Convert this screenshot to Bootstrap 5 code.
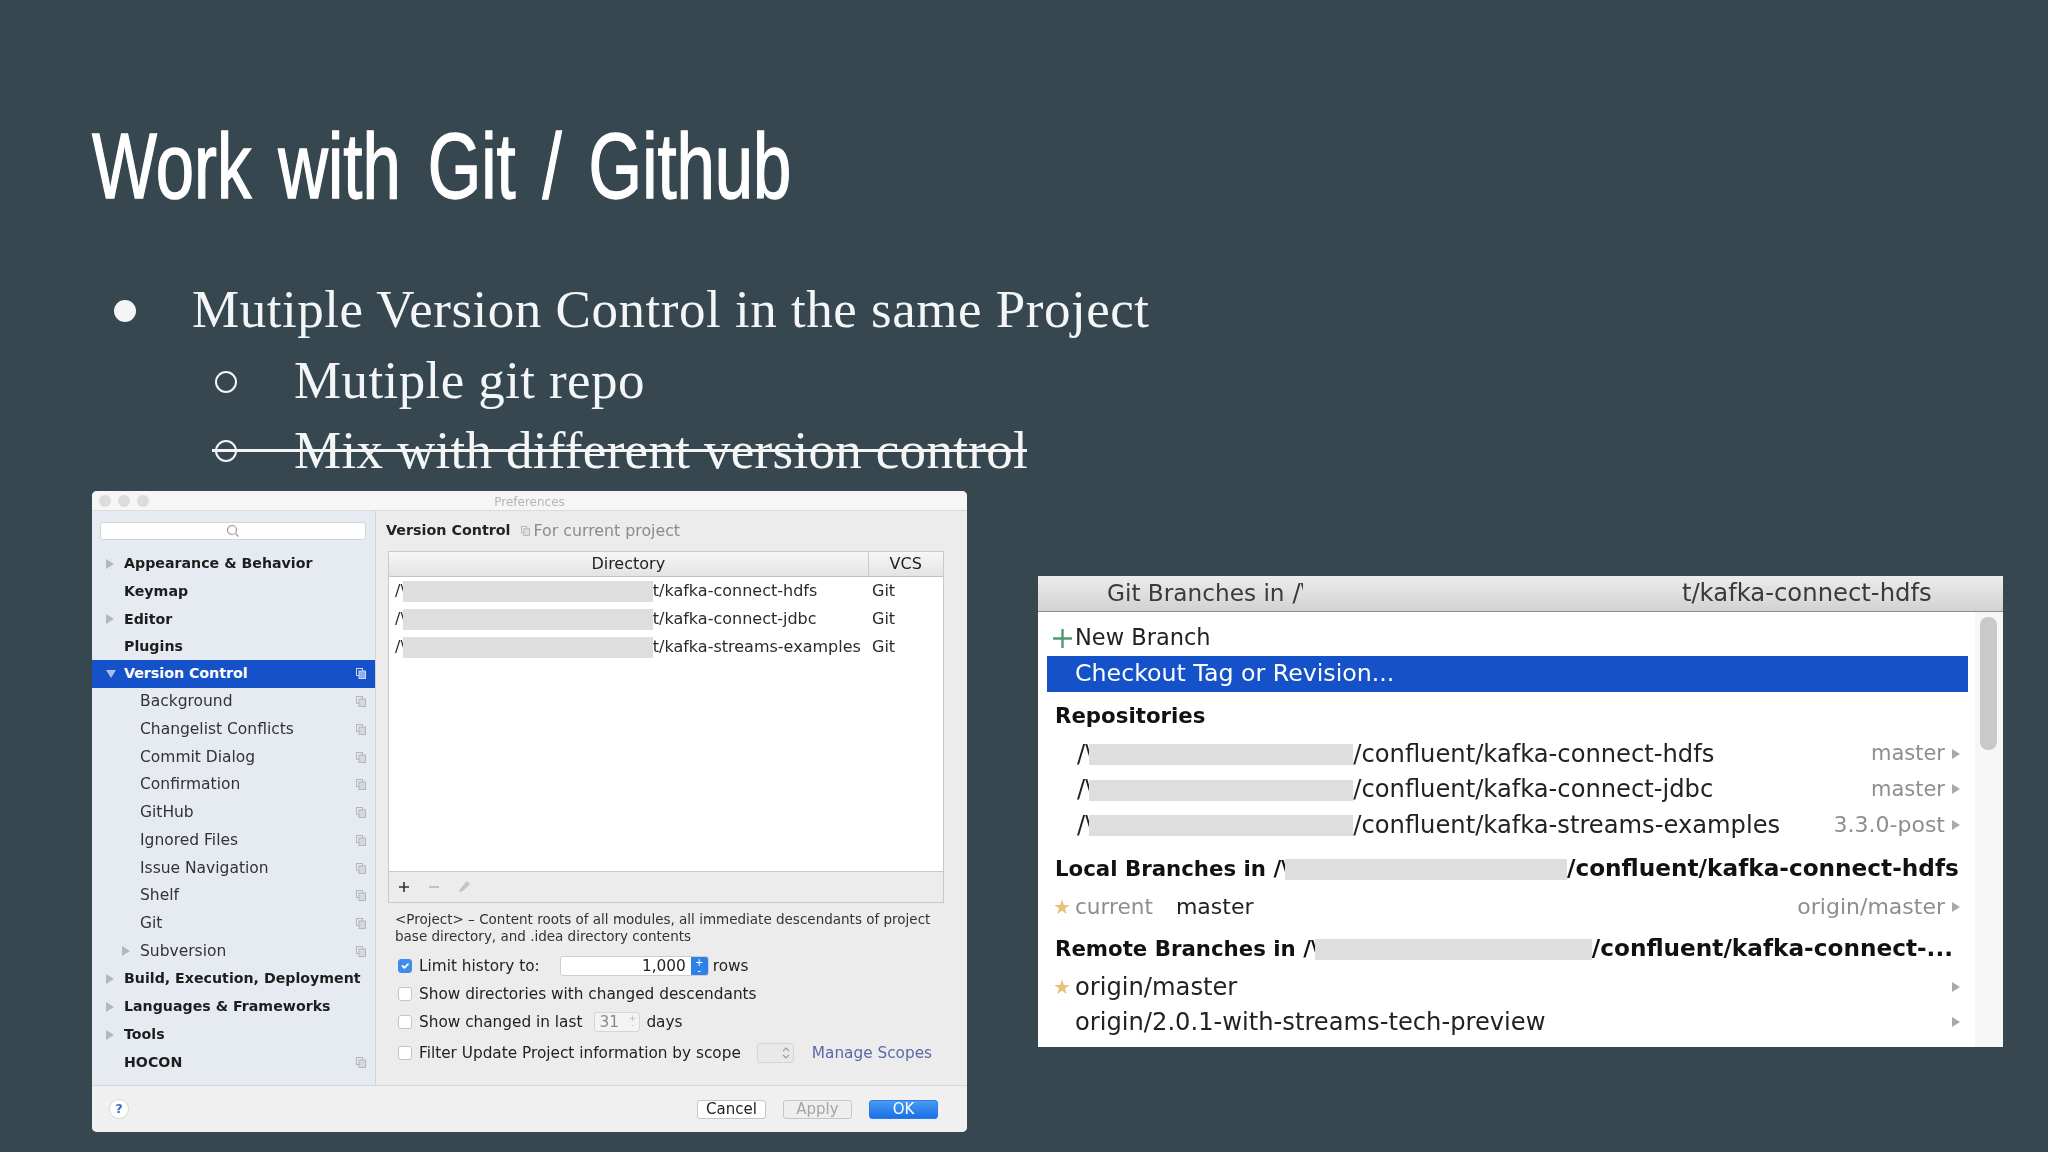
<!DOCTYPE html>
<html lang="en">
<head>
  <meta charset="UTF-8" />
  <title>Work with Git / Github</title>
  <link href="https://cdn.jsdelivr.net/npm/bootstrap@5.3.0/dist/css/bootstrap.min.css" rel="stylesheet">
  <style>
    html, body { margin: 0; height: 100%; }
    body { background: #37474f; overflow: hidden; }

    .slide { width: 2048px; height: 1152px; padding-left: 92px; }
    .title-wrap { padding-top: 120px; height: 274px; }
    .slide-title {
      display: inline-block; transform: scaleX(.74); transform-origin: left center;
      font-family: "Liberation Sans", sans-serif; -webkit-text-stroke: 1.4px #fff; white-space: nowrap;
      font-size: 93px; line-height: 1; font-weight: 400; color: #fff; margin: 0; word-spacing: 10.6px;
    }
    .bullets { list-style: none; margin: 0; padding: 0; height: 217px; color: #f3f5f6;
      font-family: "Liberation Serif", serif; font-size: 53px; letter-spacing: .4px; }
    .bullets li { height: 71px; line-height: 71px; position: relative; display: flex; align-items: center; }
    .bullets li.lvl1 { letter-spacing: .52px; }
    .bullets li.struck { height: 69px; letter-spacing: .32px; }
    .lvl1 { padding-left: 100px; }
    .lvl2 { padding-left: 202px; }
    .dot { position: absolute; left: 22px; top: 26px; width: 22px; height: 22px; border-radius: 50%; background: #f3f5f6; }
    .ring { position: absolute; left: 123px; top: 26px; width: 22px; height: 22px; border-radius: 50%; border: 2px solid #f3f5f6; }
    .struck .ring { top: 24px; }
    .struck::after { content: ""; position: absolute; left: 120px; width: 815px; top: 33px; height: 3px; background: #f3f5f6; }

    .shots { align-items: flex-start; gap: 71px; }

    /* preferences window */
    .prefs { width: 875px; height: 641px; background: #ececec; border: 0; border-radius: 5px; overflow: hidden;
      font-family: "DejaVu Sans", sans-serif; color: #222; filter: blur(.35px); }
    .prefs-top { height: 20px; background: #f6f6f6; border-bottom: 1px solid #dcdcdc; position: relative; padding-left: 7px; gap: 7px; }
    .light { width: 12px; height: 12px; border-radius: 50%; background: #dcdcdc; }
    .prefs-title { position: absolute; left: 0; right: 0; top: 2px; text-align: center; font-size: 12px; color: #b5b5b5; }
    .prefs-mid { height: 574px; }
    .side { width: 284px; background: #e6ebf2; border-right: 1px solid #cfd3d8; padding-top: 11px; }
    .search-box { height: 18px; margin: 0 9px 10px 8px; background: #fff; border: 1px solid #d2d5da; border-radius: 3px; }
    .side .list-group-item { background: transparent; border: 0; border-radius: 0; height: 27.75px; padding: 0 9px 0 14px; color: #333; font-size: 15.5px; }
    .side .list-group-item.top { font-weight: 700; font-size: 14.2px; color: #1d1d1d; }
    .side .list-group-item.active { background: #1551c8; color: #fff; }
    .arrow-slot { width: 18px; flex: none; }
    .sub-slot { width: 34px; flex: none; padding-left: 16px; }
    .tri { display: block; width: 0; height: 0; border-left: 8px solid #b4b8bd; border-top: 5px solid transparent; border-bottom: 5px solid transparent; }
    .tri-down { display: block; width: 0; height: 0; border-top: 8px solid #a9c0ec; border-left: 5px solid transparent; border-right: 5px solid transparent; }
    .copy-ic { width: 10px; height: 11px; flex: none; margin-left: auto; }

    .pane { width: 590px; padding: 0 0 0 10px; font-size: 15.3px; }
    .pane-head { height: 40px; }
    .pane-head b { font-size: 14.3px; color: #222; }
    .muted-label { color: #8b8b8b; font-size: 15.8px; margin-left: 2px; }
    .vcs-box { width: 556px; margin-left: 2px; border: 1px solid #c9c9c9; }
    .vcs-white { height: 319px; background: #fff; }
    .vcs-table { table-layout: fixed; width: 100%; margin: 0; --bs-table-bg: transparent; }
    .vcs-table th { height: 23px; padding: 0; text-align: center; font-weight: 400; font-size: 16px; color: #222;
      background: linear-gradient(#f7f7f7, #e3e3e3); border-bottom: 1px solid #c3c3c3; }
    .vcs-table th + th { border-left: 1px solid #c9c9c9; }
    .vcs-table td { height: 28.4px; padding: 0 0 0 6px; font-size: 16px; color: #2a2a2a; white-space: nowrap; border: 0; vertical-align: middle; }
    .vcs-table td + td { padding-left: 4px; }
    .vcs-bar { height: 31px; background: #ececec; border-top: 1px solid #c9c9c9; padding-left: 8px; gap: 16px; }
    .redact { display: inline-block; background: #dedede; vertical-align: middle; }
    .rd-a { width: 250px; height: 21px; margin-left: -3px; }
    .desc { margin: 8px 0 0 9px; font-size: 13.5px; line-height: 17px; color: #333; white-space: nowrap; }
    .opt { height: 28px; padding-left: 12px; gap: 7px; white-space: nowrap; font-size: 15.3px; }
    .opt-first { margin-top: 7px; }
    .opt-last { margin-top: 3px; }
    .opt .form-check-input { width: 14px; height: 14px; margin: 0; border-color: #c4c4c4; border-radius: 3px; flex: none; }
    .opt .form-check-input:checked { background-color: #3f8cea; border-color: #3f8cea; }
    .num-field { width: 149px; height: 20px; margin: 0 -3px 0 13px; background: #fff; border: 1px solid #cfcfcf; border-radius: 3px; text-align: right; line-height: 18px; overflow: hidden; }
    .num-step { width: 17px; background: #2f80e8; color: #fff; margin-left: 5px; font-size: 10px; line-height: 8px; text-align: center; padding-top: 2px; }
    .num-small { width: 46px; height: 20px; background: #f4f4f4; border: 1px solid #d5d5d5; border-radius: 3px; color: #8b8b8b; padding-left: 4px; line-height: 18px; margin-left: 5px; margin-right: -1px; }
    .small-step { margin-left: auto; margin-right: 3px; color: #bdbdbd; font-size: 9px; line-height: 7px; text-align: center; padding-top: 2px; }
    .sel-empty { width: 37px; height: 20px; margin-left: 9px; padding-right: 3px; background: #e9e9e9; border: 1px solid #d5d5d5; border-radius: 3px; }
    .scope-link { margin-left: 11px; color: #5a68a8; }
    .prefs-foot { height: 47px; background: #f0f0f0; border-top: 1px solid #d6d6d6; padding: 0 29px 0 17px; }
    .help-dot { width: 20px; height: 20px; border-radius: 50%; background: #fff; border: 1px solid #d8d8d8; color: #3f6fc0; font-size: 13px; font-weight: 700; line-height: 18px; text-align: center; }
    .foot-btn { width: 69px; height: 19px; padding: 0; font-size: 15px; line-height: 17px; border-radius: 3px; background: #fff; border: 1px solid #c6c6c6; color: #222; font-family: "DejaVu Sans", sans-serif; margin-left: 17px; }
    .foot-btn.off { background: #eee; color: #a5a5a5; }
    .foot-btn.go { background: linear-gradient(#4a9bf2, #1a6fe6); border-color: #2a7ce8; color: #fff; }

    /* git branches popup */
    .branches { width: 965px; height: 471px; margin-top: 85px; background: #fff; border: 0; border-radius: 0; overflow: hidden;
      font-family: "DejaVu Sans", sans-serif; color: #222; font-size: 24.2px; filter: blur(.35px); }
    .branches-head { height: 36px; background: linear-gradient(#ececec, #d2d2d2); border-bottom: 1px solid #8f8f8f; padding-left: 69px; color: #3a3a3a; white-space: nowrap; font-size: 24.3px; }
    .head-label { font-size: 23.2px; margin-right: 8px; }
    .rd-b { width: 379px; height: 35px; margin-left: -6px; background: linear-gradient(#ececec, #d2d2d2); }
    .branches-body { position: relative; height: 435px; padding: 8px 0 0 9px; }
    .scroll-strip { position: absolute; right: 0; top: 0; bottom: 0; width: 28px; background: #f7f7f7; }
    .scroll-thumb { position: absolute; right: 6px; top: 5px; width: 17px; height: 133px; border-radius: 8px; background: #c9c9c9; }
    .br-row { position: relative; width: 921px; height: 36px; white-space: nowrap; padding-right: 8px; }
    .br-row.pick { background: #1551c8; color: #fff; font-size: 23.7px; }
    .br-row.tall { height: 35.5px; }
    .br-row b { color: #111; font-size: 21.3px; }
    .br-row b .bpath { font-size: 23.2px; }
    .new-br { font-size: 22.5px; }
    .plus-ic { width: 19px; height: 19px; margin: 0 3px 0 6px; flex: none; }
    .txt-in { padding-left: 28px; }
    .txt-in2 { padding-left: 30px; }
    .rd-c { height: 21px; background: #dedede; display: inline-block; vertical-align: middle; margin-left: -4px; }
    .rd-c1 { width: 264px; }
    .rd-c2 { width: 277px; }
    .rd-c3 { width: 282px; }
    .hint { color: #8e8e8e; margin-left: auto; font-size: 22px; }
    .hint-sm { font-size: 21px; }
    .tri-sm { display: block; width: 0; height: 0; border-left: 8px solid #a9a9a9; border-top: 5px solid transparent; border-bottom: 5px solid transparent; margin-left: 7px; flex: none; }
    .tri-end { margin-left: auto; }
    .star { color: #e9c27a; width: 22px; margin-left: 6px; flex: none; font-size: 20px; }
    .cur-label { color: #8e8e8e; margin-right: 23px; font-size: 21.6px; }
    .cur-name { font-size: 22px; }
    .sec-a { margin-top: 6px; }
    .sec-b { margin-top: 2px; }
    .sec-c { margin-top: 8px; }
    .sec-d { margin-top: 3px; }
    .sec-e { margin-top: 6px; }
  </style>
</head>
<body>
  <div class="slide">
    <div class="title-wrap"><h1 class="slide-title">Work with Git / Github</h1></div>
    <ul class="bullets">
      <li class="lvl1"><span class="dot"></span>Mutiple Version Control in the same Project</li>
      <li class="lvl2"><span class="ring"></span>Mutiple git repo</li>
      <li class="lvl2 struck"><span class="ring"></span>Mix with different version control</li>
    </ul>

    <div class="d-flex shots">
      <div class="card prefs">
        <div class="prefs-top d-flex align-items-center">
          <span class="light"></span><span class="light"></span><span class="light"></span>
          <span class="prefs-title">Preferences</span>
        </div>
        <div class="prefs-mid d-flex">
          <div class="side">
            <div class="search-box d-flex align-items-center justify-content-center">
              <svg width="14" height="14" viewBox="0 0 14 14" fill="none" stroke="#9a9a9a" stroke-width="1.2"><circle cx="6" cy="6" r="4.5"/><path d="M9.5 9.5l3 3"/></svg>
            </div>
            <ul class="list-group">
              <li class="list-group-item top d-flex align-items-center"><span class="arrow-slot"><i class="tri"></i></span>Appearance &amp; Behavior</li>
              <li class="list-group-item top d-flex align-items-center"><span class="arrow-slot"></span>Keymap</li>
              <li class="list-group-item top d-flex align-items-center"><span class="arrow-slot"><i class="tri"></i></span>Editor</li>
              <li class="list-group-item top d-flex align-items-center"><span class="arrow-slot"></span>Plugins</li>
              <li class="list-group-item top active d-flex align-items-center"><span class="arrow-slot"><i class="tri-down"></i></span>Version Control<svg class="copy-ic" viewBox="0 0 10 11" fill="none" stroke="#c9d8f5"><rect x="0.5" y="0.5" width="6" height="7"/><rect x="3" y="3" width="6.5" height="7.5" fill="#8fb0ea"/></svg></li>
              <li class="list-group-item d-flex align-items-center"><span class="sub-slot"></span>Background<svg class="copy-ic" viewBox="0 0 10 11" fill="none" stroke="#b3b7bc"><rect x="0.5" y="0.5" width="6" height="7"/><rect x="3" y="3" width="6.5" height="7.5" fill="#d5d8dc"/></svg></li>
              <li class="list-group-item d-flex align-items-center"><span class="sub-slot"></span>Changelist Conflicts<svg class="copy-ic" viewBox="0 0 10 11" fill="none" stroke="#b3b7bc"><rect x="0.5" y="0.5" width="6" height="7"/><rect x="3" y="3" width="6.5" height="7.5" fill="#d5d8dc"/></svg></li>
              <li class="list-group-item d-flex align-items-center"><span class="sub-slot"></span>Commit Dialog<svg class="copy-ic" viewBox="0 0 10 11" fill="none" stroke="#b3b7bc"><rect x="0.5" y="0.5" width="6" height="7"/><rect x="3" y="3" width="6.5" height="7.5" fill="#d5d8dc"/></svg></li>
              <li class="list-group-item d-flex align-items-center"><span class="sub-slot"></span>Confirmation<svg class="copy-ic" viewBox="0 0 10 11" fill="none" stroke="#b3b7bc"><rect x="0.5" y="0.5" width="6" height="7"/><rect x="3" y="3" width="6.5" height="7.5" fill="#d5d8dc"/></svg></li>
              <li class="list-group-item d-flex align-items-center"><span class="sub-slot"></span>GitHub<svg class="copy-ic" viewBox="0 0 10 11" fill="none" stroke="#b3b7bc"><rect x="0.5" y="0.5" width="6" height="7"/><rect x="3" y="3" width="6.5" height="7.5" fill="#d5d8dc"/></svg></li>
              <li class="list-group-item d-flex align-items-center"><span class="sub-slot"></span>Ignored Files<svg class="copy-ic" viewBox="0 0 10 11" fill="none" stroke="#b3b7bc"><rect x="0.5" y="0.5" width="6" height="7"/><rect x="3" y="3" width="6.5" height="7.5" fill="#d5d8dc"/></svg></li>
              <li class="list-group-item d-flex align-items-center"><span class="sub-slot"></span>Issue Navigation<svg class="copy-ic" viewBox="0 0 10 11" fill="none" stroke="#b3b7bc"><rect x="0.5" y="0.5" width="6" height="7"/><rect x="3" y="3" width="6.5" height="7.5" fill="#d5d8dc"/></svg></li>
              <li class="list-group-item d-flex align-items-center"><span class="sub-slot"></span>Shelf<svg class="copy-ic" viewBox="0 0 10 11" fill="none" stroke="#b3b7bc"><rect x="0.5" y="0.5" width="6" height="7"/><rect x="3" y="3" width="6.5" height="7.5" fill="#d5d8dc"/></svg></li>
              <li class="list-group-item d-flex align-items-center"><span class="sub-slot"></span>Git<svg class="copy-ic" viewBox="0 0 10 11" fill="none" stroke="#b3b7bc"><rect x="0.5" y="0.5" width="6" height="7"/><rect x="3" y="3" width="6.5" height="7.5" fill="#d5d8dc"/></svg></li>
              <li class="list-group-item d-flex align-items-center"><span class="sub-slot"><i class="tri"></i></span>Subversion<svg class="copy-ic" viewBox="0 0 10 11" fill="none" stroke="#b3b7bc"><rect x="0.5" y="0.5" width="6" height="7"/><rect x="3" y="3" width="6.5" height="7.5" fill="#d5d8dc"/></svg></li>
              <li class="list-group-item top d-flex align-items-center"><span class="arrow-slot"><i class="tri"></i></span>Build, Execution, Deployment</li>
              <li class="list-group-item top d-flex align-items-center"><span class="arrow-slot"><i class="tri"></i></span>Languages &amp; Frameworks</li>
              <li class="list-group-item top d-flex align-items-center"><span class="arrow-slot"><i class="tri"></i></span>Tools</li>
              <li class="list-group-item top d-flex align-items-center"><span class="arrow-slot"></span>HOCON<svg class="copy-ic" viewBox="0 0 10 11" fill="none" stroke="#b3b7bc"><rect x="0.5" y="0.5" width="6" height="7"/><rect x="3" y="3" width="6.5" height="7.5" fill="#d5d8dc"/></svg></li>
            </ul>
          </div>
          <div class="pane">
            <div class="pane-head d-flex align-items-center gap-2">
              <b>Version Control</b>
              <span class="muted-label d-flex align-items-center gap-1"><svg width="9" height="10" viewBox="0 0 10 11" fill="none" stroke="#b3b3b3"><rect x="0.5" y="0.5" width="6" height="7"/><rect x="3" y="3" width="6.5" height="7.5" fill="#ddd"/></svg>For current project</span>
            </div>
            <div class="vcs-box">
              <div class="vcs-white">
                <table class="table table-borderless vcs-table">
                  <colgroup><col style="width:479px"><col></colgroup>
                  <thead><tr><th>Directory</th><th>VCS</th></tr></thead>
                  <tbody>
                    <tr><td>/\<span class="redact rd-a"></span>t/kafka-connect-hdfs</td><td>Git</td></tr>
                    <tr><td>/\<span class="redact rd-a"></span>t/kafka-connect-jdbc</td><td>Git</td></tr>
                    <tr><td>/\<span class="redact rd-a"></span>t/kafka-streams-examples</td><td>Git</td></tr>
                  </tbody>
                </table>
              </div>
              <div class="vcs-bar d-flex align-items-center">
                <svg width="14" height="14" viewBox="0 0 14 14" stroke="#333" stroke-width="1.6"><path d="M7 2v10M2 7h10"/></svg>
                <svg width="14" height="14" viewBox="0 0 14 14" stroke="#b8b8b8" stroke-width="1.6"><path d="M2 7h10"/></svg>
                <svg width="14" height="14" viewBox="0 0 14 14" fill="#c4c4c4"><path d="M10 1l3 3-7 7-4 1.5L3 9z"/></svg>
              </div>
            </div>
            <p class="desc">&lt;Project&gt; – Content roots of all modules, all immediate descendants of project<br>base directory, and .idea directory contents</p>
            <div class="opt opt-first d-flex align-items-center"><input class="form-check-input" type="checkbox" checked>Limit history to:<span class="num-field d-flex justify-content-end"><span>1,000</span><span class="num-step">+<br>-</span></span>rows</div>
            <div class="opt d-flex align-items-center"><input class="form-check-input" type="checkbox">Show directories with changed descendants</div>
            <div class="opt d-flex align-items-center"><input class="form-check-input" type="checkbox">Show changed in last<span class="num-small d-flex">31<span class="small-step">+<br>-</span></span>days</div>
            <div class="opt opt-last d-flex align-items-center"><input class="form-check-input" type="checkbox">Filter Update Project information by scope<span class="sel-empty d-flex align-items-center justify-content-end"><svg width="8" height="14" viewBox="0 0 8 14" fill="none" stroke="#999" stroke-width="1.1"><path d="M1 5l3-3 3 3M1 9l3 3 3-3"/></svg></span><span class="scope-link">Manage Scopes</span></div>
          </div>
        </div>
        <div class="prefs-foot d-flex align-items-center">
          <span class="help-dot">?</span>
          <button class="btn foot-btn ms-auto" type="button">Cancel</button>
          <button class="btn foot-btn off" type="button">Apply</button>
          <button class="btn foot-btn go" type="button">OK</button>
        </div>
      </div>

      <div class="card branches">
        <div class="branches-head d-flex align-items-center"><span class="head-label">Git Branches in</span>/\<span class="rd-b"></span>t/kafka-connect-hdfs</div>
        <div class="branches-body">
          <div class="scroll-strip"><div class="scroll-thumb"></div></div>
          <div class="br-row new-br d-flex align-items-center"><svg class="plus-ic" viewBox="0 0 19 19" stroke="#4f9a70" stroke-width="2.4"><path d="M9.5 0v19M0 9.5h19"/></svg>New Branch</div>
          <div class="br-row pick d-flex align-items-center"><span class="txt-in">Checkout Tag or Revision...</span></div>
          <div class="br-row sec-a d-flex align-items-center"><b class="ms-2">Repositories</b></div>
          <div class="br-row tall sec-b d-flex align-items-center"><span class="txt-in2">/\<span class="rd-c rd-c1"></span>/confluent/kafka-connect-hdfs</span><span class="hint hint-sm">master</span><i class="tri-sm"></i></div>
          <div class="br-row tall d-flex align-items-center"><span class="txt-in2">/\<span class="rd-c rd-c1"></span>/confluent/kafka-connect-jdbc</span><span class="hint hint-sm">master</span><i class="tri-sm"></i></div>
          <div class="br-row tall d-flex align-items-center"><span class="txt-in2">/\<span class="rd-c rd-c1"></span>/confluent/kafka-streams-examples</span><span class="hint">3.3.0-post</span><i class="tri-sm"></i></div>
          <div class="br-row tall sec-c d-flex align-items-center"><b class="ms-2">Local Branches in /\<span class="rd-c rd-c3"></span><span class="bpath">/confluent/kafka-connect-hdfs</span></b></div>
          <div class="br-row tall sec-d d-flex align-items-center"><span class="star">★</span><span class="cur-label">current</span><span class="cur-name">master</span><span class="hint">origin/master</span><i class="tri-sm"></i></div>
          <div class="br-row tall sec-e d-flex align-items-center"><b class="ms-2">Remote Branches in /\<span class="rd-c rd-c2"></span><span class="bpath">/confluent/kafka-connect-...</span></b></div>
          <div class="br-row tall sec-d d-flex align-items-center"><span class="star">★</span>origin/master<i class="tri-sm tri-end"></i></div>
          <div class="br-row tall d-flex align-items-center"><span class="txt-in">origin/2.0.1-with-streams-tech-preview</span><i class="tri-sm tri-end"></i></div>
        </div>
      </div>
    </div>
  </div>
  <script src="https://cdn.jsdelivr.net/npm/bootstrap@5.3.0/dist/js/bootstrap.bundle.min.js"></script>
</body>
</html>
